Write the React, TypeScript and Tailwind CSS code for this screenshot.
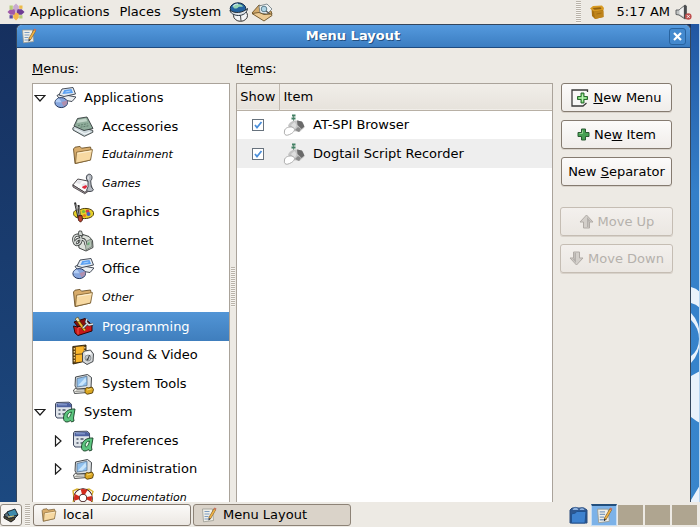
import React, { useState } from "react";

type IconProps = { className?: string };

const Folder = ({ className = "size-[22px]" }: IconProps) => (
  <svg viewBox="0 0 22 22" className={className} aria-hidden="true">
    <path d="M1.500 5 3 3.200l5-.8 1.500 1.800 9-1.200.6 2.300L18.500 16 3 19.600z" fill="#d9ad6c" stroke="#6b5128" strokeWidth=".9" strokeLinejoin="round" />
    <path d="M4.500 8.200 20.500 5.600 18.500 16 3.500 19.300z" fill="#f7d9a2" stroke="#7a5d2f" strokeWidth=".8" strokeLinejoin="round" />
    <path d="M5.500 9.300 19.400 7" stroke="#fdf0d4" />
  </svg>
);

const OfficeIcon = ({ className = "size-[22px]" }: IconProps) => (
  <svg viewBox="0 0 22 22" className={className} aria-hidden="true" strokeLinejoin="round">
    <path d="m3 8.500 3-1.500 16 3-4 4.500-12-2z" fill="#eceff2" stroke="#333b47" strokeWidth=".9" />
    <path d="m5 8 3-6 11-1.500L21.500 7 10 9.500z" fill="#e3eaf2" stroke="#333b47" strokeWidth=".9" />
    <path d="m8.300 7 2-4L17.500 2 19 6z" fill="#5aa0f2" />
    <path d="m11.500 5 5-1" stroke="#a8d1ff" />
    <ellipse cx="7.200" cy="15.600" rx="6.300" ry="5" fill="#86a6de" stroke="#26375c" />
    <path d="m7.500 15.200 5.500-2c1 2.800-1 5-3.500 6z" fill="#b08fae" />
    <path d="M7.500 15.200 5 11.200c-2 .5-3.500 2-3.500 4z" fill="#b3cdf4" />
  </svg>
);

const AccessoriesIcon = () => (
  <svg viewBox="0 0 22 22" className="size-[22px]" aria-hidden="true" strokeLinejoin="round">
    <path d="m.8 12 3-3 17 5.500v1.800l-8.500 4L1 14z" fill="#cdd8dc" stroke="#343c3d" strokeWidth=".9" />
    <path d="m3 13 10 5 5-2" stroke="#f5f9fa" fill="none" />
    <path d="m2 10 3.500-7.500L15 1l6 11.500-9 2z" fill="#8fac9b" stroke="#343c3d" strokeWidth=".9" />
    <path d="M5.800 4 14 2.500l1.300 2.700L5 7z" fill="#c2d5c9" />
    <path d="m6 9.500 9.500-1.800m-7 3.500 8-1.400" stroke="#607e6c" strokeDasharray="2 1" />
  </svg>
);

const GamesIcon = () => (
  <svg viewBox="0 0 22 22" className="size-[22px]" aria-hidden="true" strokeLinejoin="round">
    <path d="m.8 12 5-6 10 2L20 14l-7 5.500z" fill="#fafafa" stroke="#3a3538" strokeWidth=".9" />
    <path d="m.8 12 12 7.500 7-5.500v1.800l-7 5L1 14z" fill="#b9aeb3" stroke="#3a3538" strokeWidth=".8" />
    <path d="m6 7 4 1-2 3-4-1zm6 3 3 1-2 3-4-2z" fill="#e4e4e9" />
    <path d="M12 13c1-1.500 3.500-1 3 1l-2 2-2.500-1c-1-1 0-2 1.500-2z" fill="#e0283c" />
    <path d="M16 8c-2.800-2-1.800-6.800 1.200-6.800S21 5.500 18.700 7.800l.6 6 2.200 3c-1 2.200-6 2.200-7 .5l1.500-3.500z" fill="#b5bac1" stroke="#363a42" strokeWidth=".9" />
    <path d="M16.800 3.500c-1 1-1 2 0 3" stroke="#fff" fill="none" />
  </svg>
);

const GraphicsIcon = () => (
  <svg viewBox="0 0 22 22" className="size-[22px]" aria-hidden="true" strokeLinejoin="round">
    <path d="M1.500 12.500c0-3 3.500-4.200 6-3.200 2.500-3 13-2.500 14 2.200s-5.500 6.500-11 6C5 17.500 1.500 15.500 1.500 12.500z" fill="#e6d028" stroke="#4c3d0b" />
    <circle cx="11.500" cy="10.500" r="1.600" fill="#79bb38" />
    <circle cx="15.500" cy="10.300" r="1.800" fill="#d23b4b" />
    <circle cx="16.500" cy="13" r="2" fill="#4763c4" />
    <circle cx="12.500" cy="14.500" r="1.500" fill="#ec7b1f" />
    <path d="m3 1.500 3.500 15M6.500 4l1.500 13" stroke="#292929" strokeWidth="2" />
    <path d="m3.800 3.500 2.700 11M7 6l.8 8" stroke="#bbb" strokeWidth=".8" />
    <path d="m6 15 4-.5.500 4.500-2 2.200-2-2z" fill="#bd4430" stroke="#44170f" strokeWidth=".9" />
  </svg>
);

const InternetIcon = () => (
  <svg viewBox="0 0 22 22" className="size-[22px]" aria-hidden="true" strokeLinejoin="round">
    <path d="M6 9 11 4.500l6 2 3.500 4 .5 7-7 3.500-7-3z" fill="#dde1db" stroke="#303432" strokeWidth=".9" />
    <path d="m13 12 6-3 1 7.500-6 3.500z" fill="#b4c2b5" stroke="#525d54" strokeWidth=".6" />
    <path d="m15.500 13 2-1v2.500l-2 1z" fill="#6aae76" />
    <path d="M3 14C0 9 2 5 6 5s4 7 1 9-5 0-3-3 7-3 9 0l1 4" fill="none" stroke="#303432" strokeWidth="2.800" />
    <path d="M3 14C0 9 2 5 6 5s4 7 1 9-5 0-3-3 7-3 9 0l1 4" fill="none" stroke="#d3d7d4" strokeWidth="1.400" />
    <path d="m6 5 1-4h2.500l1.500 5z" fill="#d3d8d4" stroke="#303432" strokeWidth=".8" />
  </svg>
);

const ToolboxIcon = () => (
  <svg viewBox="0 0 22 22" className="size-[22px]" aria-hidden="true" strokeLinejoin="round">
    <path d="M2 6 13 2.500l6 5.500-13 3z" fill="#8a0e0e" stroke="#2c0606" />
    <path d="m1.500 10 4 1L20 7.500v7.500L6 19.500 3 17z" fill="#c91818" stroke="#2c0606" />
    <path d="m6 12 13-3.500M6 12v6.500" stroke="#ee5a50" />
    <path d="m5 3.500 8 11" stroke="#4d3606" strokeWidth="3.200" />
    <path d="m5 3.500 8 11" stroke="#f2b52c" strokeWidth="2" />
    <path d="m3 3 3-2 2 4-2 1z" fill="#f2e2b0" stroke="#4d3606" strokeWidth=".6" />
    <path d="m11 12 5-5m-1-4-1 3 3 3 4-1" fill="none" stroke="#33383e" strokeWidth="2.600" />
    <path d="m11 12 5-5m-1-4-1 3 3 3 4-1" fill="none" stroke="#dbe2e8" strokeWidth="1.400" />
  </svg>
);

const SoundIcon = () => (
  <svg viewBox="0 0 22 22" className="size-[22px]" aria-hidden="true" strokeLinejoin="round">
    <path d="M.8 2.500 14 1v16L1 20z" fill="#6c4811" stroke="#2e2008" strokeWidth=".9" />
    <path d="m3.800 3 8-.8v7l-8 .8zm0 8 8-.8v7l-8 1z" fill="#fbb62c" />
    <path d="M2.300 4v15M12.800 3v6" stroke="#f7dfa0" strokeWidth="1.200" strokeDasharray="1.500 1.500" />
    <path d="m10.500 9 2-2 6-1 3 4-.5 7.500-6 3-4.500-3z" fill="#d4d7d9" stroke="#383b3e" strokeWidth=".9" />
    <path d="m12.500 8.500 5.500-1.500 2 3-6 1.500z" fill="#f6f7f8" />
    <circle cx="16" cy="14" r="3" fill="#c1c6ca" stroke="#83888c" strokeWidth=".8" />
    <path d="m17.500 11-1.500 4" stroke="#3b3e41" />
    <circle cx="15.500" cy="15.500" r="1" fill="#3b3e41" />
  </svg>
);

const ComputerIcon = () => (
  <svg viewBox="0 0 22 22" className="size-[22px]" aria-hidden="true" strokeLinejoin="round">
    <path d="m1.500 17 3-2.500 14 .5-3 4.500-13 1z" fill="#f2f2ed" stroke="#3b3d3f" strokeWidth=".9" />
    <path d="m4 17 9-.4m-10 2 9-.5" stroke="#a1a19b" />
    <path d="m3.500 4 12-2.500 4 3L19 15 5 16l-2-3z" fill="#dde1e3" stroke="#32373b" strokeWidth=".9" />
    <path d="m5 5.500 10-2.300V12.500L5 14z" fill="#8fc0ee" stroke="#5e7790" strokeWidth=".8" />
    <path d="m6 12.500 7.500-8 .8 4-4 4z" fill="#c8e5fb" />
    <path d="M13 17c0-2 2-3 3.500-2l3.500-1 1.500 2.500-1 3.500-5 1.200c-2-.2-3-2-2.500-4.200z" fill="#dba722" stroke="#523c08" strokeWidth=".9" />
    <path d="m15 17 4.500-1.200" stroke="#f8dc7b" />
  </svg>
);

const PreferencesIcon = () => (
  <svg viewBox="0 0 22 22" className="size-[22px]" aria-hidden="true" strokeLinejoin="round">
    <path d="M2.500 1.500 15 1.200l2.500 2 .3 12.500-2 1.300H3L1.500 15V3z" fill="#dfe4ea" stroke="#28324c" strokeWidth=".9" />
    <path d="M2.500 2.500 15 2l2.200 1.500v2.800H2.500z" fill="#4d61a0" />
    <path d="M4 3.800h9" stroke="#8fa5d6" />
    <path d="M4.500 9h2m2 0h3m-7 4h2m2 0h2" stroke="#4b5568" strokeWidth="1.700" />
    <path d="M9.500 17c0-5 4-9.500 11.500-9l-1.500 9 .5 3-2.500 1-1-1.500c-3 2.500-7 2-7-2.500z" fill="#5cc57f" stroke="#173e25" strokeWidth=".9" />
    <path d="M17.500 11c-3 0-4.500 3-4.300 5 .5 2 3 .8 4.300-5z" fill="#e5f8e9" stroke="#1e6035" />
  </svg>
);

const HelpIcon = () => (
  <svg viewBox="0 0 22 22" className="size-[22px]" aria-hidden="true">
    <path d="m1 4 4-2 6 1.500L17 2l4 2.500-2 6 2 6-4 4-6-1.500-6 1.500-4-4 1-6z" fill="none" stroke="#d9b22f" strokeWidth="1.400" />
    <circle cx="11" cy="11" r="6.500" fill="none" stroke="#321010" strokeWidth="6.500" />
    <circle cx="11" cy="11" r="6.500" fill="none" stroke="#fafafa" strokeWidth="5" />
    <circle cx="11" cy="11" r="6.500" fill="none" stroke="#d22b1d" strokeWidth="5" strokeDasharray="5.100 5.100" strokeDashoffset="2.500" />
  </svg>
);

const DogtailIcon = () => (
  <svg viewBox="0 0 22 22" className="size-[22px]" aria-hidden="true" strokeLinejoin="round">
    <path d="M10.500 2v7" stroke="#7b9a89" />
    <path d="M8.500 4.500h4M9 1.500h3.500" stroke="#438064" strokeWidth="2" />
    <path d="M5 12c1-4 5-6 10-5.500l5 2 1.500 5-5 4.500-6-1z" fill="#c4c4c4" />
    <path d="m14 6.500 5 1 2.500 5-3 2.500-4-4z" fill="#6a6a6a" />
    <path d="m8 11 3.500-3 2 3-2 5z" fill="#dedede" />
    <path d="m12 16 3-3 3 2-2 3z" fill="#8a8a8a" />
    <path d="M1.500 17c0-3 5-5 8.500-3.500 3 1.500 1 4.500-1.500 6s-5.500 2.500-6.500 1c-1-1-.5-2-.5-3.500z" fill="#fff" stroke="#a5a5a5" strokeWidth=".9" />
  </svg>
);

const EditorIcon = ({ className = "size-4" }: IconProps) => (
  <svg viewBox="0 0 16 16" className={className} aria-hidden="true">
    <path d="M1.500 2h10l1 11.500-10 1.300z" fill="#f0efe8" stroke="#9a9b92" strokeWidth=".8" />
    <path d="M3.500 4.500h5m-5 2.500h5m-5 2.500h4m-4 2.500h5" stroke="#7d9cc0" strokeWidth="1.200" />
    <path d="m14 2-5.500 9.500" stroke="#80602c" strokeWidth="2.600" />
    <path d="m13.800 2.500-5 8.500" stroke="#efb348" strokeWidth="1.600" />
    <path d="m14.500 1-.8 1.400" stroke="#c8705f" strokeWidth="2.300" />
    <path d="m7.500 13.500.2-2.500 1.800 1z" fill="#222" />
  </svg>
);

const CentosLogo = () => (
  <svg viewBox="0 0 18 18" className="size-[18px]" aria-hidden="true">
    <path d="m9 .5 2.800 2.800v4L9 8.500 6.200 7.300v-4z" fill="#c8a9cf" />
    <path d="m17.500 9-2.800 2.800h-4L9.500 9l1.200-2.800h4z" fill="#6d3b93" />
    <path d="m9 17.500-2.800-2.800v-4L9 9.500l2.800 1.200v4z" fill="#f3b84a" />
    <path d="m.5 9 2.800-2.800h4L8.500 9l-1.200 2.800h-4z" fill="#a05aa8" />
    <path d="M2.500 2.500h3.300v4.200H2.500z" fill="#b7cc79" />
    <path d="M12.200 2.500h3.300v3.300h-3.300z" fill="#edbb48" />
    <path d="M12.200 12.200h3.300v3.300h-3.300z" fill="#b7cc79" />
    <path d="M2.500 12.200h3.300v3.300H2.500z" fill="#5a4aa0" />
  </svg>
);

const GlobeIcon = () => (
  <svg viewBox="0 0 20 20" className="size-5" aria-hidden="true">
    <ellipse cx="11.500" cy="13.500" rx="7" ry="5.800" fill="#f3f4f5" stroke="#333" />
    <ellipse cx="9" cy="6.500" rx="7.800" ry="5.700" fill="#2463a0" stroke="#142d46" />
    <path d="M4 3.500c3-2.500 9-2 10 1-2 1-4-.5-5 1S4 7.500 4 3.500z" fill="#93d3b2" />
    <path d="M4 4.500c1-2 3-2.500 5-2.500" stroke="#e3f4fd" fill="none" />
    <path d="M1 8c4 4 13 3 17.500-1.500C18 11 14 13.500 9.500 13.500S1 11 1 8z" fill="#dfe4e8" stroke="#26323d" />
    <path d="M11.500 13.500 12 19" stroke="#444" />
  </svg>
);

const MailIcon = () => (
  <svg viewBox="0 0 22 20" className="h-5 w-[22px]" aria-hidden="true" strokeLinejoin="round">
    <path d="M1 11 8 3l12 6 1 3-8 6z" fill="#d3aa6c" stroke="#6b5228" strokeWidth=".9" />
    <path d="m8 4 8-2 5 5-5 5-7-1z" fill="#eef2f3" stroke="#69777e" strokeWidth=".8" />
    <circle cx="13" cy="7" r="2.800" fill="#b0d5e5" stroke="#5c7f8e" />
    <path d="m15 9 4 3" stroke="#555" strokeWidth="1.300" />
    <path d="m1 11.500 7-1 5 2 7.500-.5.500 1.500-8 5.500z" fill="#ecca93" stroke="#6b5228" strokeWidth=".9" />
  </svg>
);

const BoxIcon = () => (
  <svg viewBox="0 0 16 16" className="size-4" aria-hidden="true">
    <path d="M2.500 4 14 3.500l.5 9.500L6 15l-3-3z" fill="#a9700e" />
    <path d="m1 4.500 3-2.500 9-.5 2 2.500-.5 2L5 7.500z" fill="#d99b23" />
    <path d="m5 7.500 9.500-1v6.500L6 15z" fill="#bf841a" />
    <path d="m3.500 4 8-.8 1 1.800-7 .8z" fill="#94600c" />
    <path d="m7.500 10 5-1" stroke="#a56d10" />
  </svg>
);

const VolumeIcon = () => (
  <svg viewBox="0 0 17 17" className="size-[17px]" aria-hidden="true">
    <path d="M1 6h3l6-5 1.500 1v12l-1.500 1L4 11 1 10.500z" fill="#c0c3c3" stroke="#555859" strokeWidth=".9" />
    <path d="m4.500 6 4-3v9.500l-4-2.500z" fill="#f0f1f1" />
    <path d="M10 1.500v13" stroke="#3c3f41" strokeWidth="1.800" />
    <circle cx="13.300" cy="12.500" r="3.300" fill="#bd4f4f" />
    <path d="m12 11.200 2.600 2.600m0-2.600L12 13.800" stroke="#fff" />
  </svg>
);

const DesktopIcon = () => (
  <svg viewBox="0 0 16 16" className="size-4" aria-hidden="true" strokeLinejoin="round">
    <path d="m1 8 5-4 9 4-6 6z" fill="#58717d" stroke="#22292d" />
    <path d="m4 5 8-3 3 6-8 2z" fill="#3f8bab" stroke="#1f2a31" />
    <path d="m1 9 6 3 4-2 1 2-4 3-7-4z" fill="#504c37" stroke="#222" />
    <path d="m5 10 6-1" stroke="#e7d37d" />
  </svg>
);

const BlueFolderIcon = () => (
  <svg viewBox="0 0 20 20" className="size-5" aria-hidden="true">
    <path d="M2 5 4 3h12l3 2v13H2z" fill="#2d5790" stroke="#2a4c7c" />
    <path d="M4 5c1-3.500 6-3.500 7 0 1-3 5-3 6 0" fill="#8fb3df" stroke="#3b6194" />
    <path d="m3.500 9 4-1 1-1.500h9.500L17 18H3.500z" fill="#3e82cf" stroke="#225390" />
  </svg>
);

const NewMenuIcon = () => (
  <svg viewBox="0 0 18 18" className="size-[18px]" aria-hidden="true">
    <path d="M16.500 3V1H1v16h11l3.500-3" fill="#f8f8f7" stroke="#3a3a3a" strokeWidth="1.300" />
    <path d="M10 4h3v3.500h3.500v3H13V14h-3v-3.500H6.500v-3H10z" fill="#6fd06c" stroke="#1d5a22" strokeLinejoin="round" strokeWidth=".9" />
    <path d="M11.500 5.500v7M8 9h7" stroke="#c3f3bb" />
  </svg>
);

const PlusIcon = () => (
  <svg viewBox="0 0 13 13" className="size-[13px]" aria-hidden="true">
    <path d="M4.500 1h4v3.500H12v4H8.500V12h-4V8.500H1v-4h3.500z" fill="#47a052" stroke="#2a5a32" strokeLinejoin="round" />
    <path d="M5.500 2.500v3h-3" stroke="#8fcd8d" fill="none" />
  </svg>
);

const Arrow = ({ down = false }: { down?: boolean }) => (
  <svg viewBox="0 0 15 15" className={down ? "size-[15px] rotate-180" : "size-[15px]"} aria-hidden="true">
    <path d="m7.500 1 6.500 7h-3.500v6h-6V8H1z" fill="#d3cfca" stroke="#b0aba6" strokeLinejoin="round" />
    <path d="m8 3 4 4.500H9.500V13H8z" fill="#b4b0ac" />
  </svg>
);

const Expander = ({ open }: { open: boolean }) => (
  <svg viewBox="0 0 12 12" className={open ? "size-3 rotate-90" : "size-3"} aria-hidden="true">
    <path d="M3.500 1v10L9 6z" fill="#fff" stroke="#1c1c1c" strokeWidth="1.200" />
  </svg>
);

type Entry = { name: string; icon: React.ReactNode; level: 0 | 1; open?: boolean; empty?: boolean };

const entries: Entry[] = [
  { name: "Applications", icon: <OfficeIcon />, level: 0, open: true },
  { name: "Accessories", icon: <AccessoriesIcon />, level: 1 },
  { name: "Edutainment", icon: <Folder />, level: 1, empty: true },
  { name: "Games", icon: <GamesIcon />, level: 1, empty: true },
  { name: "Graphics", icon: <GraphicsIcon />, level: 1 },
  { name: "Internet", icon: <InternetIcon />, level: 1 },
  { name: "Office", icon: <OfficeIcon />, level: 1 },
  { name: "Other", icon: <Folder />, level: 1, empty: true },
  { name: "Programming", icon: <ToolboxIcon />, level: 1 },
  { name: "Sound & Video", icon: <SoundIcon />, level: 1 },
  { name: "System Tools", icon: <ComputerIcon />, level: 1 },
  { name: "System", icon: <PreferencesIcon />, level: 0, open: true },
  { name: "Preferences", icon: <PreferencesIcon />, level: 1, open: false },
  { name: "Administration", icon: <ComputerIcon />, level: 1, open: false },
  { name: "Documentation", icon: <HelpIcon />, level: 1, empty: true },
];

function MenuTree() {
  const [selected, setSelected] = useState("Programming");
  return (
    <ul aria-labelledby="menus-label" className="grid h-[428px] shrink-0 auto-rows-fr">
      {entries.map((e) => (
        <li key={e.name} className="min-h-0">
          <button
            type="button"
            aria-pressed={selected === e.name}
            onClick={() => setSelected(e.name)}
            className={`flex h-full w-full items-center gap-2 text-left ${e.level ? "pl-[19px]" : "pl-px"} ${
              selected === e.name ? "bg-linear-to-b from-[#5295d6] to-[#3f7ebd] text-white" : ""
            }`}
          >
            <span className="flex w-3 justify-center">{e.open !== undefined && <Expander open={e.open} />}</span>
            {e.icon}
            <span className={e.empty ? "text-[11px] leading-2 italic" : ""}>{e.name}</span>
          </button>
        </li>
      ))}
    </ul>
  );
}

function ItemRow({ name, shaded }: { name: string; shaded?: boolean }) {
  return (
    <tr className={shaded ? "h-[29px] bg-[#eeeeee]" : "h-[29px]"}>
      <td className="p-0">
        <span className="grid place-items-center">
          <input
            type="checkbox"
            defaultChecked
            aria-label={`Show ${name}`}
            className="peer col-start-1 row-start-1 size-3 appearance-none border border-[#67727d] bg-white"
          />
          <svg viewBox="0 0 12 12" className="pointer-events-none invisible col-start-1 row-start-1 size-3 peer-checked:visible" aria-hidden="true">
            <path d="m3 6 2 2.500L9.500 3" fill="none" stroke="#4b8fda" strokeWidth="1.800" />
          </svg>
        </span>
      </td>
      <td className="p-0 pl-1">
        <span className="flex items-center gap-2">
          <DogtailIcon />
          {name}
        </span>
      </td>
    </tr>
  );
}

function DialogButton({ children, disabled }: { children: React.ReactNode; disabled?: boolean }) {
  return (
    <button
      type="button"
      disabled={disabled}
      className="flex h-[29px] w-full items-center justify-center gap-1 whitespace-nowrap rounded-[3px] border border-[#857b70] bg-linear-to-b from-[#fcfbfa] to-[#f0edea] shadow-[0_1px_0_#d8d2ca] disabled:border-[#c5bdb3] disabled:from-[#f3f0ed] disabled:to-[#ebe7e2] disabled:text-[#b5b1ac]"
    >
      {children}
    </button>
  );
}

const grip = "bg-[repeating-linear-gradient(to_bottom,#b9b3a9_0_1px,#f7f5f1_1px_2px)]";

export default function App() {
  return (
    <div className="flex h-screen flex-col overflow-hidden bg-[#edeae4] font-['DejaVu_Sans',sans-serif] text-[13px] leading-4 text-black">
      <header className="flex h-6 shrink-0 items-center pr-2 pl-[7px]">
        <nav className="flex items-center">
          <CentosLogo />
          <button type="button" className="ml-[5px]">Applications</button>
          <button type="button" className="ml-[10px]">Places</button>
          <button type="button" className="mr-2 ml-3">System</button>
          <GlobeIcon />
          <span className="ml-0.5"><MailIcon /></span>
        </nav>
        <div className="ml-auto flex items-center">
          <span className={`mr-2 h-[22px] w-[5px] ${grip}`} />
          <BoxIcon />
          <time className="mr-[5px] ml-3">5:17 AM</time>
          <VolumeIcon />
        </div>
      </header>

      <main className="flex min-h-0 flex-1 bg-linear-to-b from-[#16305f] to-[#1c4980] pl-4">
        <section className="flex min-w-0 flex-1 flex-col overflow-hidden rounded-t-md border border-b-0 border-[#34465c] bg-[#edeae4]" aria-label="Menu Layout">
          <div className="flex h-[23px] shrink-0 items-center border-b border-[#1e4b80] bg-linear-to-b from-[#559ade] to-[#3b7dc1] pr-1 pl-1 text-white">
            <EditorIcon />
            <h1 className="flex-1 text-center font-bold [text-shadow:1px_1px_0_#234f80]">Menu Layout</h1>
            <button type="button" aria-label="Close" className="grid size-[17px] place-items-center rounded-[3px] border border-[#28639f] bg-[#4389ce]">
              <svg viewBox="0 0 9 9" className="size-[9px]" aria-hidden="true"><path d="m1 1 7 7M8 1 1 8" stroke="#fff" strokeWidth="2.200" /></svg>
            </button>
          </div>

          <div className="flex min-h-0 flex-1 pt-[13px] pr-[17px] pl-[15px]">
            <div className="flex w-[198px] shrink-0 flex-col gap-[6px]">
              <h2 id="menus-label"><u>M</u>enus:</h2>
              <div className="min-h-0 flex-1 overflow-hidden border border-b-0 border-[#aaa39a] bg-white">
                <MenuTree />
              </div>
            </div>
            <div className="flex w-[6px] shrink-0 justify-center pt-[206px]">
              <span className={`h-[40px] w-1 ${grip}`} />
            </div>
            <div className="flex min-w-0 flex-1 flex-col gap-[6px]">
              <h2 id="items-label">It<u>e</u>ms:</h2>
              <div className="min-h-0 flex-1 border border-b-0 border-[#aaa39a] bg-white">
                <table className="w-full table-fixed border-collapse text-left" aria-labelledby="items-label">
                  <thead>
                    <tr className="h-[26px] border-b border-[#b8b0a5] bg-linear-to-b from-[#f1eee9] to-[#e7e3dc]">
                      <th className="w-[42px] border-r border-[#c2bab0] p-0 text-center font-normal">Show</th>
                      <th className="p-0 pl-1 font-normal">Item</th>
                    </tr>
                  </thead>
                  <tbody>
                    <ItemRow name="AT-SPI Browser" />
                    <ItemRow name="Dogtail Script Recorder" shaded />
                  </tbody>
                </table>
              </div>
            </div>
            <div className="ml-[7px] flex w-[113px] shrink-0 flex-col gap-[9px] pt-[22px]">
              <div className="flex flex-col gap-2 px-px">
                <DialogButton><NewMenuIcon /><span><u>N</u>ew Menu</span></DialogButton>
                <DialogButton><PlusIcon /><span>Ne<u>w</u> Item</span></DialogButton>
                <DialogButton><span>New <u>S</u>eparator</span></DialogButton>
              </div>
              <div className="mt-3 flex flex-col gap-2">
                <DialogButton disabled><Arrow />Move Up</DialogButton>
                <DialogButton disabled><Arrow down />Move Down</DialogButton>
              </div>
            </div>
          </div>
        </section>
        <svg viewBox="0 24 9 478" preserveAspectRatio="none" className="h-full w-[9px] shrink-0" aria-hidden="true">
          <defs>
            <linearGradient id="sky" x1="0" y1="0" x2="0" y2="1">
              <stop offset="0" stopColor="#2156a1" />
              <stop offset=".35" stopColor="#347fc9" />
              <stop offset="1" stopColor="#3986cc" />
            </linearGradient>
          </defs>
          <path d="M0 24h9v478H0z" fill="url(#sky)" />
          <path d="M0 287q5 1 9 5v16q-4-4-9-5zM0 313q9 9 9 25t-9 25v-7q8-6 8-17t-8-19zM0 376l9-5v52q-4-2-9-6zM9 485v17H0v-2z" fill="#e9f2fb" />
          <path d="M8 24h1v478H8z" fill="#b9d7f2" />
        </svg>
      </main>

      <footer className="flex h-[25px] shrink-0 items-center pr-[3px]">
        <button type="button" aria-label="Show desktop" className="grid h-[22px] w-[22px] place-items-center rounded-[3px] border border-[#918a80] bg-[#f7f5f2]">
          <DesktopIcon />
        </button>
        <span className={`mx-[3px] h-[22px] w-[5px] ${grip}`} />
        <button type="button" className="flex h-[22px] w-[158px] items-center gap-[6px] rounded-[3px] border border-[#857b70] bg-linear-to-b from-[#fbfaf8] to-[#ece8e3] pl-[7px]">
          <Folder className="size-4" />
          local
        </button>
        <button type="button" className="ml-0.5 flex h-[22px] w-[158px] items-center gap-[6px] rounded-[3px] border border-[#8d8377] bg-[#dad3c9] pl-[7px]">
          <EditorIcon />
          Menu Layout
        </button>
        <div className="ml-auto flex items-center gap-px">
          <span className="mr-0.5"><BlueFolderIcon /></span>
          <button type="button" aria-label="Workspace 1" className="grid h-[22px] w-[26px] place-items-center border border-t-2 border-[#c5dcf3] border-t-[#234f7c] bg-[#7cb2e8]">
            <EditorIcon className="size-[17px]" />
          </button>
          <button type="button" aria-label="Workspace 2" className="h-5 w-[25px] bg-[#afa590]" />
          <button type="button" aria-label="Workspace 3" className="ml-px h-5 w-[25px] bg-[#afa590]" />
          <button type="button" aria-label="Workspace 4" className="ml-px h-5 w-[25px] bg-[#afa590]" />
        </div>
      </footer>
    </div>
  );
}
